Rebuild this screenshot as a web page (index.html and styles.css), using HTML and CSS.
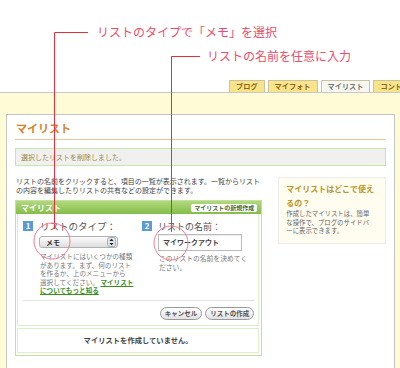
FILE: index.html
```html
<!DOCTYPE html>
<html>
<head>
    <meta charset="utf-8">
    <title>マイリスト</title>
    <link rel="stylesheet" href="styles.css">
</head>
<body>
    <div class="top">
        <div class="tabs">
            <span class="tab">ブログ</span>
            <span class="tab">マイフォト</span>
            <span class="tab tab-active">マイリスト</span>
            <span class="tab">コントロ</span>
        </div>
    </div>

    <div class="content">
        <div class="panel">
            <h1 class="title">マイリスト</h1>
            <div class="notice">選択したリストを削除しました。</div>

            <div class="cols">
                <div class="main">
                    <p class="intro">リストの名前をクリックすると、項目の一覧が表示されます。一覧からリストの内容を編集したりリストの共有などの設定ができます。</p>

                    <div class="box">
                        <div class="box-head">
                            <span class="box-title">マイリスト</span>
                            <span class="new-btn">マイリストの新規作成</span>
                        </div>
                        <div class="box-body">
                            <div class="form">
                                <div class="steps">
                                    <div class="step step-type">
                                        <div class="step-head">
                                            <span class="num">1</span>
                                            <span class="label">リストのタイプ：</span>
                                        </div>
                                        <div class="select">
                                            <span>メモ</span>
                                            <svg class="stepper" viewBox="0 0 9 10" width="9" height="10">
                                                <rect x="0.5" y="0.5" width="8" height="9" rx="2" fill="#dfe3ea" stroke="#a8adb6"/>
                                                <path d="M2.5 4 L4.5 1.8 L6.5 4 Z" fill="#222"/>
                                                <path d="M2.5 6 L4.5 8.2 L6.5 6 Z" fill="#222"/>
                                            </svg>
                                        </div>
                                        <p class="desc desc-type">マイリストにはいくつかの種類があります。まず、何のリストを作るか、上のメニューから<br>選択してください。 <a class="more" href="#">マイリストについてもっと知る</a></p>
                                    </div>
                                    <div class="step step-name">
                                        <div class="step-head">
                                            <span class="num">2</span>
                                            <span class="label">リストの名前：</span>
                                        </div>
                                        <div class="input">マイワークアウト</div>
                                        <p class="desc desc-name">このリストの名前を決めてください。</p>
                                    </div>
                                </div>
                                <div class="actions">
                                    <span class="btn">キャンセル</span>
                                    <span class="btn">リストの作成</span>
                                </div>
                            </div>
                            <div class="empty">マイリストを作成していません。</div>
                        </div>
                    </div>
                </div>

                <div class="side">
                    <h3>マイリストはどこで使えるの？</h3>
                    <p>作成したマイリストは、簡単な操作で、ブログのサイドバーに表示できます。</p>
                </div>
            </div>
        </div>
    </div>

    <!-- callouts drawn over the screenshot -->
    <div class="callouts">
        <svg width="400" height="368" viewBox="0 0 400 368">
            <polyline points="88,32.5 54.5,32.5 54.5,229" fill="none" stroke="#e8303c" stroke-width="1"/>
            <polyline points="200,56.5 171.5,56.5 171.5,232" fill="none" stroke="#e8303c" stroke-width="1"/>
            <circle cx="52" cy="241" r="18" fill="none" stroke="#f07a92" stroke-width="1"/>
            <circle cx="171" cy="243" r="17" fill="none" stroke="#f07a92" stroke-width="1"/>
        </svg>
        <span class="note note-type">リストのタイプで「メモ」を選択</span>
        <span class="note note-name">リストの名前を任意に入力</span>
    </div>
</body>
</html>
```

FILE: styles.css
```css
* {
    margin: 0;
    padding: 0;
    box-sizing: border-box;
}

body {
    width: 400px;
    height: 368px;
    overflow: hidden;
    position: relative;
    background: #fff;
    font-family: "Noto Sans CJK JP", sans-serif;
    color: #444;
}

.top {
    height: 92px;
    display: flex;
    align-items: flex-end;
}

.tabs {
    display: flex;
    gap: 3px;
    padding-left: 229px;
    width: 100%;
    overflow: hidden;
}

.tab {
    flex-shrink: 0;
    height: 12px;
    padding: 0 6px;
    border: 1px solid #cbc3a0;
    border-bottom: none;
    background: #f9e48c;
    font-size: 7.2px;
    font-weight: bold;
    line-height: 11px;
    color: #8a6a18;
}

.tab-active {
    background: #f7f7f2;
    color: #777;
}

.content {
    height: 276px;
    overflow: hidden;
    background: #fffbd6;
    border-top: 1px solid #c8c8c8;
    padding: 21px 5px 0 6px;
}

.panel {
    height: 260px;
    background: #fff;
    border: 1px solid #c4c4c4;
    border-bottom: none;
    padding: 0 8px;
}

.title {
    padding: 6px 0 4px 1px;
    font-size: 11px;
    line-height: 14px;
    font-weight: bold;
    color: #d8832c;
    border-bottom: 1px solid #f2c49a;
}

.notice {
    margin-top: 8px;
    height: 18px;
    padding-left: 5px;
    background: #f0f0f0;
    border: 1px solid #c8e6a8;
    font-size: 7px;
    line-height: 16px;
    color: #a08a3c;
}

.cols {
    display: flex;
    gap: 16px;
    margin-top: 11px;
}

.main {
    width: 248px;
}

.intro {
    font-size: 7px;
    line-height: 9px;
    color: #444;
    padding-left: 1px;
}

.box {
    margin-top: 5px;
    border: 1px solid #c4e0a0;
    background: #fff;
}

.box-head {
    height: 13px;
    display: flex;
    align-items: center;
    justify-content: space-between;
    padding: 0 4px 0 5px;
    background: linear-gradient(#b2d97c, #84bc4a);
}

.box-title {
    font-size: 8px;
    font-weight: bold;
    color: #fff;
}

.new-btn {
    height: 8px;
    padding: 0 3px;
    background: #fff;
    border-radius: 2px;
    font-size: 6px;
    line-height: 8px;
    font-weight: bold;
    color: #4d6a30;
}

.box-body {
    padding: 0 2px 2px 1px;
}

.form {
    border: 1px solid #dcefc8;
    border-top: none;
    padding: 7px 3px 5px 5px;
}

.steps {
    display: flex;
}

.step-type {
    width: 119px;
}

.step-head {
    display: flex;
    align-items: center;
    gap: 7px;
    height: 10px;
}

.step-name .step-head {
    gap: 6px;
}

.num {
    width: 10px;
    height: 10px;
    background: #5b9bd5;
    color: #fff;
    font-size: 8px;
    font-weight: bold;
    line-height: 10px;
    text-align: center;
}

.label {
    font-size: 9.5px;
    color: #555;
}

.step-name .label {
    font-size: 9px;
}

.select {
    margin: 5px 0 0 16px;
    width: 79px;
    height: 12px;
    display: flex;
    align-items: center;
    justify-content: space-between;
    padding: 0 1px 0 6px;
    border: 1px solid #b0b0b0;
    border-radius: 3px;
    background: linear-gradient(#fdfdfd, #dedede);
    font-size: 7px;
    font-weight: bold;
    color: #333;
}

.stepper {
    display: block;
}

.desc {
    margin: 4px 0 0 17px;
    font-size: 6.6px;
    line-height: 8.5px;
    color: #777;
}

.desc-type {
    width: 95px;
}

.more {
    color: #3a8e1c;
    font-weight: bold;
    text-decoration: underline;
}

.step-name {
    flex: 1;
}

.input {
    margin: 3px 0 0 16px;
    width: 84px;
    height: 17px;
    padding-left: 4px;
    border: 1px solid #bbb;
    box-shadow: inset 0 1px 1px rgba(0, 0, 0, 0.08);
    font-size: 7px;
    line-height: 15px;
    font-weight: bold;
    color: #444;
}

.desc-name {
    margin-top: 3px;
    width: 92px;
    font-size: 6.8px;
    line-height: 9px;
}

.actions {
    display: flex;
    justify-content: flex-end;
    gap: 3px;
    margin-top: 5px;
    padding: 6px 1px 0 0;
    border-top: 1px solid #e2e2e2;
}

.btn {
    height: 13px;
    padding: 0 4px;
    border: 1px solid #999;
    border-radius: 7px;
    background: linear-gradient(#fff, #e2e2e2);
    font-size: 6.5px;
    line-height: 11px;
    font-weight: bold;
    color: #555;
}

.empty {
    margin-top: 2px;
    height: 25px;
    border: 1px solid #dcefc8;
    text-align: center;
    font-size: 7.3px;
    line-height: 23px;
    font-weight: bold;
    color: #444;
}

.side {
    width: 108px;
    height: 67px;
    padding: 4px 14px 0 7px;
    background: #fffcf0;
    border: 1px solid #ececec;
}

.side h3 {
    margin-right: -7px;
    font-size: 8px;
    line-height: 14px;
    font-weight: bold;
    color: #b8962a;
}

.side p {
    font-size: 6.4px;
    line-height: 8.5px;
    color: #666;
}

.callouts {
    position: absolute;
    top: 0;
    left: 0;
    width: 400px;
    height: 368px;
    pointer-events: none;
}

.callouts svg {
    position: absolute;
    top: 0;
    left: 0;
}

.note {
    position: absolute;
    font-size: 12px;
    line-height: 14px;
    color: #ee4d6d;
    white-space: nowrap;
}

.note-type {
    left: 97px;
    top: 25px;
}

.note-name {
    left: 207px;
    top: 49px;
}
```
